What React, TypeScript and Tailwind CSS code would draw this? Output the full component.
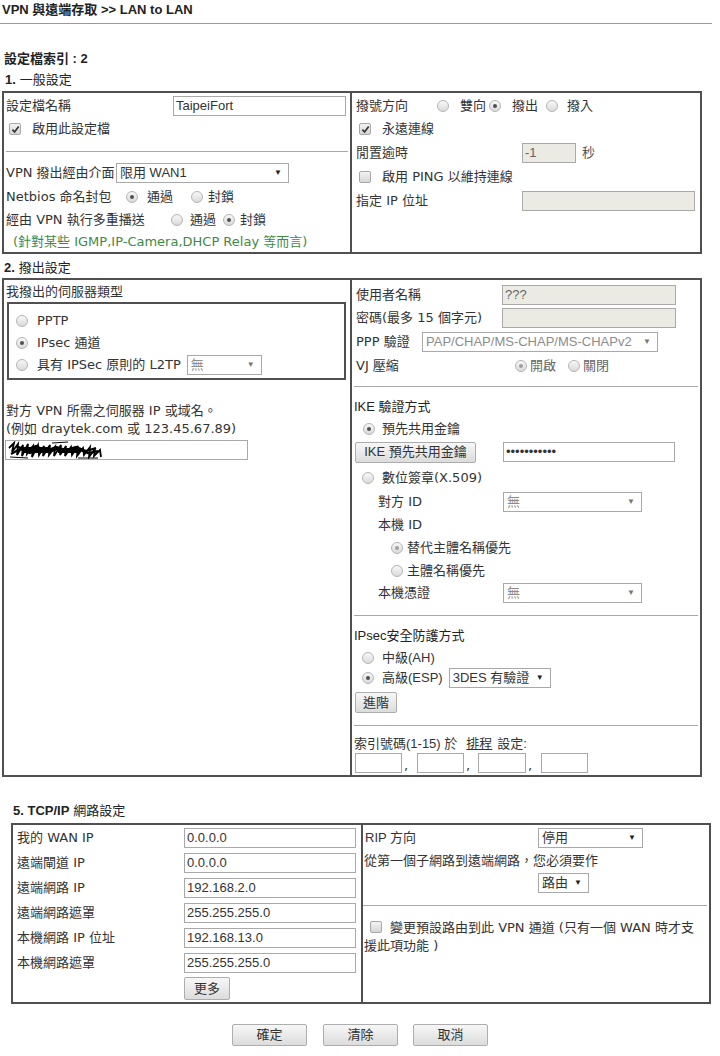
import React from "react";

const V = "font-['DejaVu_Sans','Noto_Sans_CJK_TC',sans-serif]";
const A = "font-['Liberation_Sans','Noto_Sans_CJK_TC',sans-serif]";

function Radio({ checked = false, dim = false }: { checked?: boolean; dim?: boolean }) {
  return (
    <span className="inline-flex h-[12px] w-[12px] shrink-0 items-center justify-center rounded-full border border-[#b4b4b4] bg-linear-to-b from-[#f8f8f8] to-[#dadada]">
      {checked && (
        <span className={dim ? "h-[4px] w-[4px] rounded-full bg-[#a0a0a0]" : "h-[4px] w-[4px] rounded-full bg-[#505050]"} />
      )}
    </span>
  );
}

function Check({ checked = false }: { checked?: boolean }) {
  return (
    <span className="inline-flex h-[12px] w-[12px] shrink-0 items-center justify-center rounded-[2px] border border-[#a8a8a8] bg-linear-to-b from-[#f3f3f3] to-[#d6d6d6] align-middle">
      {checked && (
        <svg width="9" height="9" viewBox="0 0 9 9">
          <path d="M1.4 4.6 L3.6 7 L7.7 1.5" fill="none" stroke="#333" strokeWidth="1.7" />
        </svg>
      )}
    </span>
  );
}

function Input({ className = "", value = "", gray = false, children }: { className?: string; value?: string; gray?: boolean; children?: React.ReactNode }) {
  return (
    <div
      className={`flex h-[20px] shrink-0 items-center overflow-hidden border border-[#a9a9a9] pl-[2px] ${A} text-[13px] ${
        gray ? "bg-[#ebebe4] text-[#666]" : "bg-white text-[#333]"
      } ${className}`}
    >
      {children ?? <span className="whitespace-nowrap">{value}</span>}
    </div>
  );
}

function Select({ className = "", value, dim = false }: { className?: string; value: string; dim?: boolean }) {
  return (
    <div
      className={`flex h-[20px] shrink-0 items-center justify-between border border-[#a9a9a9] bg-white pl-[3px] pr-[6px] ${A} text-[13px] ${
        dim ? "text-[#8c8c8c]" : "text-[#333]"
      } ${className}`}
    >
      <span className="whitespace-nowrap">{value}</span>
      <span className={dim ? "text-[8px] text-[#777]" : "text-[8px] text-[#222]"}>▼</span>
    </div>
  );
}

function Btn({ className = "", children }: { className?: string; children: React.ReactNode }) {
  return (
    <div
      className={`flex shrink-0 items-center justify-center rounded-[2px] border border-[#adadad] bg-linear-to-b from-[#f7f7f7] to-[#dcdcdc] ${A} text-[13px] text-[#333] ${className}`}
    >
      {children}
    </div>
  );
}

function Scribble() {
  return (
    <svg width="96" height="20" viewBox="0 0 96 20" className="shrink-0">
      <path
        d="M1 8 L6 3 L4 12 L10 4 L9 15 L15 5 L14 16 L20 4 L19 14 L25 6 L24 17 L30 5 L31 15 L36 6 L35 16 L42 5 L41 15 L47 7 L46 16 L53 5 L52 15 L58 6 L57 16 L63 7 L64 15 L70 6 L69 16 L75 8 L76 15 L82 7 L81 17 L87 9 L86 16 L92 10 L93 17"
        fill="none"
        stroke="#000"
        strokeWidth="1.8"
      />
      <path
        d="M3 14 L12 9 L22 13 L30 8 L40 12 L50 9 L60 12 L70 9 L80 13 L90 11 M8 6 L18 10 L28 6 L38 11 L48 7 L58 10 L68 7 L78 11 L88 8"
        fill="none"
        stroke="#000"
        strokeWidth="2.2"
      />
      <path d="M14 7 L40 7 L40 13 L14 13 Z M50 8 L72 8 L72 13 L50 13 Z" fill="#000" />
      <path d="M2 17 L20 18 M44 3 L60 2 M70 18 L90 18" fill="none" stroke="#000" strokeWidth="1" />
    </svg>
  );
}

export default function App() {
  return (
    <div className={`h-[1056px] w-[720px] overflow-hidden bg-white text-[13px] leading-[16px] text-[#333] ${V}`}>
      {/* title */}
      <div className={`flex h-[20px] items-center pl-[2px] font-bold text-[#222] ${A}`}>VPN 與遠端存取 &gt;&gt; LAN to LAN</div>
      <div className="mt-[3px] h-px w-[712px] bg-[#9a9a9a]" />

      <div className={`mt-[25px] flex h-[20px] items-center pl-[4px] font-bold text-[#222] ${A}`}>設定檔索引 : 2</div>
      <div className={`flex h-[22px] items-center pl-[5px] text-[#222] ${A}`}>
        <span className="font-bold">1.</span>
        <span className="ml-[4px]">一般設定</span>
      </div>

      {/* section 1 */}
      <div className="ml-[2px] flex w-[700px] border-2 border-[#505050]">
        <div className="flex w-[346px] flex-col">
          <div className="mt-[2px] flex h-[22px] items-center pl-[2px]">
            <span className="w-[167px] shrink-0">設定檔名稱</span>
            <Input className="w-[173px]" value="TaipeiFort" />
          </div>
          <div className="flex h-[24px] items-center pl-[5px]">
            <Check checked />
            <span className="ml-[11px]">啟用此設定檔</span>
          </div>
          <div className="mx-[2px] mt-[10px] h-px bg-[#a8a8a8]" />
          <div className="mt-[9px] flex h-[24px] items-center pl-[2px]">
            <span className="w-[110px] shrink-0 whitespace-nowrap">VPN 撥出經由介面</span>
            <Select className="w-[173px]" value="限用 WAN1" />
          </div>
          <div className="flex h-[23px] items-center pl-[2px]">
            <span className="w-[120px] shrink-0 whitespace-nowrap">Netbios 命名封包</span>
            <Radio checked />
            <span className="ml-[9px]">通過</span>
            <span className="ml-[18px] inline-flex"><Radio /></span>
            <span className="ml-[5px]">封鎖</span>
          </div>
          <div className="flex h-[23px] items-center pl-[2px]">
            <span className="w-[165px] shrink-0 whitespace-nowrap">經由 VPN 執行多重播送</span>
            <Radio />
            <span className="ml-[7px]">通過</span>
            <span className="ml-[7px] inline-flex"><Radio checked /></span>
            <span className="ml-[5px]">封鎖</span>
          </div>
          <div className="flex h-[21px] items-center whitespace-nowrap pl-[9px] text-[#3f8a3f]">(針對某些 IGMP,IP-Camera,DHCP Relay 等而言)</div>
        </div>

        <div className="flex w-[350px] flex-col border-l-2 border-[#505050]">
          <div className="mt-[2px] flex h-[22px] items-center pl-[4px]">
            <span className="w-[81px] shrink-0">撥號方向</span>
            <Radio />
            <span className="ml-[11px]">雙向</span>
            <span className="ml-[3px] inline-flex"><Radio checked /></span>
            <span className="ml-[11px]">撥出</span>
            <span className="ml-[8px] inline-flex"><Radio /></span>
            <span className="ml-[9px]">撥入</span>
          </div>
          <div className="flex h-[24px] items-center pl-[7px]">
            <Check checked />
            <span className="ml-[11px]">永遠連線</span>
          </div>
          <div className="flex h-[24px] items-center pl-[4px]">
            <span className="w-[166px] shrink-0">閒置逾時</span>
            <Input className="w-[54px]" gray value="-1" />
            <span className="ml-[6px] text-[#555]">秒</span>
          </div>
          <div className="flex h-[24px] items-center pl-[7px]">
            <Check />
            <span className="ml-[11px] whitespace-nowrap">啟用 PING 以維持連線</span>
          </div>
          <div className="flex h-[24px] items-center pl-[4px]">
            <span className="w-[166px] shrink-0">指定 IP 位址</span>
            <Input className="w-[173px]" gray />
          </div>
        </div>
      </div>

      <div className={`flex h-[24px] items-center pl-[4px] pt-[4px] text-[#222] ${A}`}>
        <span className="font-bold">2.</span>
        <span className="ml-[4px]">撥出設定</span>
      </div>

      {/* section 2 */}
      <div className="ml-[2px] flex w-[700px] border-2 border-[#505050]">
        <div className="flex w-[346px] flex-col">
          <div className="mt-[2px] flex h-[20px] items-center pl-[2px]">我撥出的伺服器類型</div>
          <div className="ml-[3px] flex w-[339px] flex-col border-2 border-[#505050] pb-[2px] pt-[6px]">
            <div className="flex h-[22px] items-center pl-[7px]">
              <Radio />
              <span className="ml-[9px]">PPTP</span>
            </div>
            <div className="flex h-[22px] items-center pl-[7px]">
              <Radio checked />
              <span className="ml-[9px]">IPsec 通道</span>
            </div>
            <div className="flex h-[22px] items-center pl-[7px]">
              <Radio />
              <span className="ml-[9px] whitespace-nowrap">具有 IPSec 原則的 L2TP</span>
              <Select className="ml-[6px] w-[75px]" value="無" dim />
            </div>
          </div>
          <div className="mt-[22px] flex h-[18px] items-center whitespace-nowrap pl-[2px]">對方 VPN 所需之伺服器 IP 或域名。</div>
          <div className="flex h-[17px] items-center whitespace-nowrap pl-[2px]">(例如 draytek.com 或 123.45.67.89)</div>
          <div className="ml-[1px] mt-[3px]">
            <Input className="w-[243px] pl-0">
              <Scribble />
            </Input>
          </div>
        </div>

        <div className="flex w-[350px] flex-col border-l-2 border-[#505050] pb-[2px]">
          <div className="mt-[3px] flex h-[23px] items-center pl-[4px]">
            <span className="w-[146px] shrink-0">使用者名稱</span>
            <Input className="w-[174px]" gray value="???" />
          </div>
          <div className="flex h-[24px] items-center pl-[4px]">
            <span className="w-[146px] shrink-0 whitespace-nowrap">密碼(最多 15 個字元)</span>
            <Input className="w-[174px]" gray />
          </div>
          <div className="flex h-[24px] items-center pl-[4px]">
            <span className="w-[66px] shrink-0 whitespace-nowrap">PPP 驗證</span>
            <Select className="w-[236px]" value="PAP/CHAP/MS-CHAP/MS-CHAPv2" dim />
          </div>
          <div className="flex h-[24px] items-center pl-[4px]">
            <span className="w-[159px] shrink-0">VJ 壓縮</span>
            <Radio checked dim />
            <span className="ml-[3px] text-[#666]">開啟</span>
            <span className="ml-[12px] inline-flex"><Radio /></span>
            <span className="ml-[3px] text-[#666]">關閉</span>
          </div>
          <div className="mx-[2px] mt-[8px] h-px bg-[#a8a8a8]" />
          <div className={`mt-[9px] flex h-[22px] items-center pl-[2px] text-[#222] ${A}`}>IKE 驗證方式</div>
          <div className="flex h-[21px] items-center pl-[11px]">
            <Radio checked />
            <span className="ml-[7px]">預先共用金鑰</span>
          </div>
          <div className="flex h-[26px] items-center pl-[3px]">
            <Btn className="h-[21px] w-[121px]">IKE 預先共用金鑰</Btn>
            <Input className="ml-[27px] w-[172px]" value="•••••••••••" />
          </div>
          <div className="flex h-[26px] items-center pl-[10px]">
            <Radio />
            <span className="ml-[8px]">數位簽章(X.509)</span>
          </div>
          <div className="flex h-[22px] items-center pl-[26px]">
            <span className="w-[125px] shrink-0">對方 ID</span>
            <Select className="w-[139px]" value="無" dim />
          </div>
          <div className="flex h-[23px] items-center pl-[26px]">本機 ID</div>
          <div className="flex h-[23px] items-center pl-[39px]">
            <Radio checked dim />
            <span className="ml-[4px]">替代主體名稱優先</span>
          </div>
          <div className="flex h-[23px] items-center pl-[39px]">
            <Radio />
            <span className="ml-[4px]">主體名稱優先</span>
          </div>
          <div className="flex h-[22px] items-center pl-[26px]">
            <span className="w-[125px] shrink-0">本機憑證</span>
            <Select className="w-[139px]" value="無" dim />
          </div>
          <div className="mx-[2px] mt-[11px] h-px bg-[#a8a8a8]" />
          <div className={`mt-[8px] flex h-[24px] items-center pl-[2px] text-[#222] ${A}`}>IPsec安全防護方式</div>
          <div className="flex h-[20px] items-center pl-[10px]">
            <Radio />
            <span className={`ml-[8px] ${A}`}>中級(AH)</span>
          </div>
          <div className="flex h-[20px] items-center pl-[10px]">
            <Radio checked />
            <span className={`ml-[8px] ${A}`}>高級(ESP)</span>
            <Select className="ml-[6px] w-[102px]" value="3DES 有驗證" />
          </div>
          <div className="mt-[4px] flex pl-[3px]">
            <Btn className="h-[21px] w-[42px]">進階</Btn>
          </div>
          <div className="mx-[2px] mt-[12px] h-px bg-[#a8a8a8]" />
          <div className={`mt-[9px] flex h-[18px] items-center whitespace-nowrap pl-[2px] ${A}`}>
            <span>索引號碼(1-15) 於</span>
            <span className="ml-[9px] underline">排程</span>
            <span className="ml-[5px]">設定:</span>
          </div>
          <div className="flex h-[20px] items-end pl-[3px]">
            <Input className="w-[47px]" />
            <span className="w-[15px] pl-[2px] leading-[14px]">,</span>
            <Input className="w-[47px]" />
            <span className="w-[14px] pl-[2px] leading-[14px]">,</span>
            <Input className="w-[48px]" />
            <span className="w-[15px] pl-[2px] leading-[14px]">,</span>
            <Input className="w-[47px]" />
          </div>
        </div>
      </div>

      <div className={`mt-[24px] flex h-[20px] items-center pl-[13px] text-[#222] ${A}`}>
        <span className="font-bold">5. TCP/IP</span>
        <span className="ml-[4px]">網路設定</span>
      </div>

      {/* section 5 */}
      <div className="ml-[11px] mt-[2px] flex w-[700px] border-2 border-[#505050]">
        <div className="flex w-[348px] flex-col">
          {[
            ["我的 WAN IP", "0.0.0.0"],
            ["遠端閘道 IP", "0.0.0.0"],
            ["遠端網路 IP", "192.168.2.0"],
            ["遠端網路遮罩", "255.255.255.0"],
            ["本機網路 IP 位址", "192.168.13.0"],
            ["本機網路遮罩", "255.255.255.0"],
          ].map(([l, v]) => (
            <div key={l} className="flex h-[25px] items-center pl-[4px]">
              <span className="w-[167px] shrink-0 whitespace-nowrap">{l}</span>
              <Input className="w-[172px]" value={v} />
            </div>
          ))}
          <div className="flex h-[27px] items-start pl-[171px] pt-[2px]">
            <Btn className="h-[23px] w-[46px]">更多</Btn>
          </div>
        </div>
        <div className="flex w-[348px] flex-col border-l-2 border-[#505050]">
          <div className="flex h-[25px] items-center pl-[2px]">
            <span className={`w-[173px] shrink-0 ${A}`}>RIP 方向</span>
            <Select className="w-[105px]" value="停用" />
          </div>
          <div className="flex h-[22px] items-center whitespace-nowrap pl-[1px]">從第一個子網路到遠端網路，您必須要作</div>
          <div className="flex h-[22px] items-center pl-[175px]">
            <Select className="w-[51px]" value="路由" />
          </div>
          <div className="mr-[2px] mt-[11px] h-px bg-[#a8a8a8]" />
          <div className="mt-[13px] whitespace-nowrap pl-[1px] leading-[18px]">
            <span className="ml-[6px] inline-flex align-[-1px]"><Check /></span>
            <span className="ml-[8px]">變更預設路由到此 VPN 通道 (只有一個 WAN 時才支</span>
            <br />
            <span>援此項功能 )</span>
          </div>
        </div>
      </div>

      {/* bottom buttons */}
      <div className="mt-[20px] flex">
        <Btn className="ml-[232px] h-[22px] w-[75px]">確定</Btn>
        <Btn className="ml-[16px] h-[22px] w-[75px]">清除</Btn>
        <Btn className="ml-[15px] h-[22px] w-[75px]">取消</Btn>
      </div>
    </div>
  );
}
